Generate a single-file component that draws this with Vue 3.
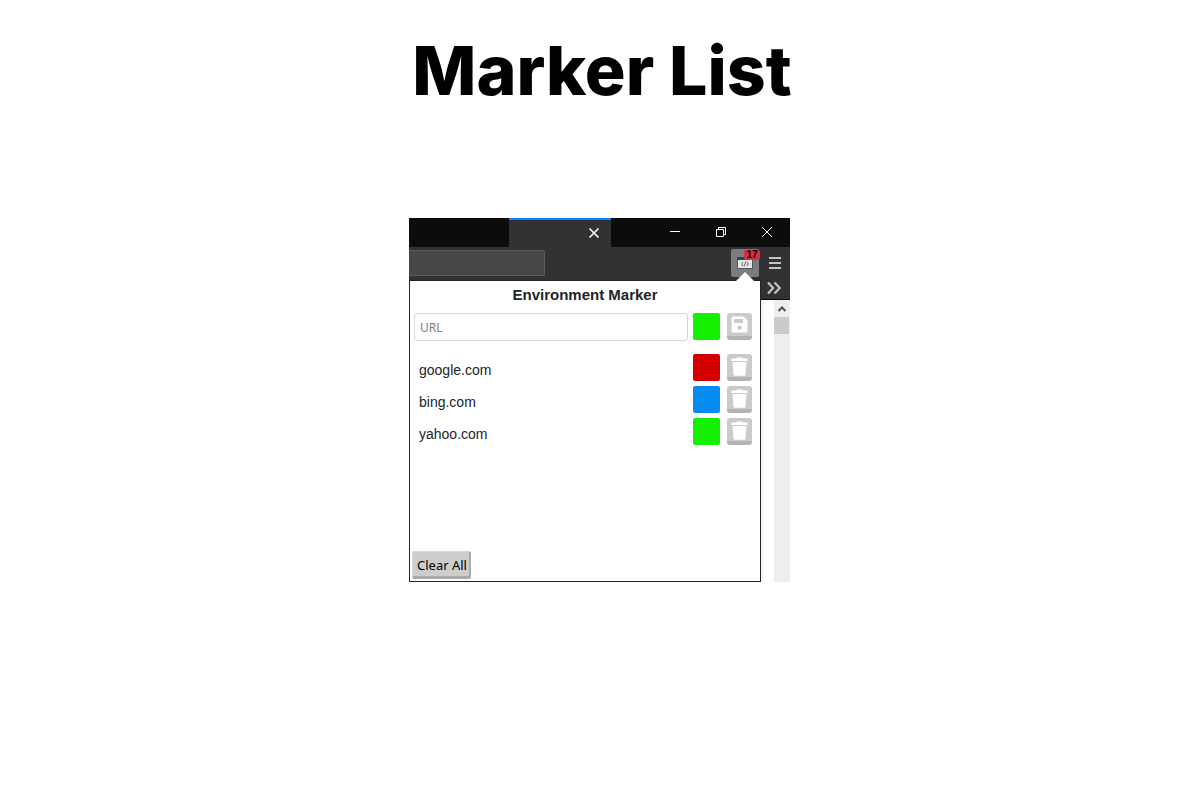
<script setup>
import { ref } from 'vue'

const url = ref('')
const markers = ref([
  { host: 'google.com', color: '#d40000' },
  { host: 'bing.com', color: '#058bf2' },
  { host: 'yahoo.com', color: '#14f000' },
])
function remove(i) {
  markers.value.splice(i, 1)
}
</script>

<template>
  <main class="page">
    <h1>Marker List</h1>
    <section class="window">
      <div class="titlebar">
        <div class="tab">
          <button class="bare" aria-label="Close tab">
            <svg width="12" height="12" viewBox="0 0 12 12"><path d="M1.5 1.5l9 9M10.500 1.500l-9 9" stroke="#f4f4f4" stroke-width="1.7" fill="none" /></svg>
          </button>
        </div>
        <div class="controls">
          <button class="bare" aria-label="Minimize">
            <svg width="12" height="12" viewBox="0 0 12 12"><path d="M1 5.500h10" stroke="#fff" fill="none" /></svg>
          </button>
          <button class="bare" aria-label="Restore">
            <svg width="12" height="12" viewBox="0 0 12 12"><path d="M1.500 3.500h7v7h-7zM3.500 3.500v-2h7v7h-2" stroke="#fff" fill="none" /></svg>
          </button>
          <button class="bare" aria-label="Close window">
            <svg width="12" height="12" viewBox="0 0 12 12"><path d="M1 1l10 10M11 1l-10 10" stroke="#fff" stroke-width="1" fill="none" /></svg>
          </button>
        </div>
      </div>
      <div class="toolbar">
        <div class="address"></div>
        <button class="extension" aria-label="Environment Marker">
          <svg width="16" height="13" viewBox="0 0 16 13">
            <path d="M0 1h16v11H0z" fill="#55565c" />
            <path d="M1 1h14v10H1z" fill="#e8e8ea" />
            <path d="M0 0h16v3H0z" fill="#17486f" />
            <path d="M6 5l-1.500 2L6 9M10 5l1.500 2L10 9M9 4.500l-2 5" stroke="#66666c" fill="none" />
          </svg>
          <span class="badge">17</span>
        </button>
        <button class="bare menu" aria-label="Menu">
          <svg width="12" height="12" viewBox="0 0 12 12"><path d="M0 1h12M0 6h12M0 11h12" stroke="#c4c4c6" stroke-width="2" fill="none" /></svg>
        </button>
      </div>
      <div class="bookmarks">
        <button class="bare" aria-label="More bookmarks">
          <svg width="14" height="12" viewBox="0 0 14 12"><path d="M1 0.500l5.200 5.500L1 11.500M7.500 0.500l5.200 5.500-5.200 5.500" stroke="#c4c4c6" stroke-width="2.200" fill="none" /></svg>
        </button>
      </div>
      <div class="content">
        <div class="scrollbar">
          <svg width="16" height="17" viewBox="0 0 16 17"><path d="M4.500 11L8 7.500l3.500 3.500" stroke="#505050" stroke-width="2" fill="none" /></svg>
          <div class="thumb"></div>
        </div>
      </div>

      <div class="popup">
        <h2>Environment Marker</h2>
        <form class="row entry" @submit.prevent>
          <input v-model="url" type="text" placeholder="URL" aria-label="URL" />
          <button type="button" class="swatch green" aria-label="Marker colour"></button>
          <button type="submit" class="tool" aria-label="Save">
            <svg width="17" height="17" viewBox="0 0 17 17">
              <path fill="#fff" fill-rule="evenodd" d="M2 0.500h10.500L16.500 4.500V15q0 1.500-1.500 1.500H2Q0.500 16.500 0.500 15V2Q0.500 0.500 2 0.500zM3 3v4h9V3zM8.500 9.500a2.200 2.200 0 1 0 0.010 0z" />
            </svg>
          </button>
        </form>
        <ul>
          <li v-for="(m, i) in markers" :key="m.host" class="row">
            <span class="host">{{ m.host }}</span>
            <button class="swatch" :style="{ background: m.color }" :aria-label="'Colour of ' + m.host"></button>
            <button class="tool" :aria-label="'Delete ' + m.host" @click="remove(i)">
              <svg width="17" height="19" viewBox="0 0 17 19">
                <path fill="#fff" d="M5.500 0.500h6v1H16q0.800 0 0.800 0.800V4H0.200V2.300q0-0.800 0.800-0.800h4.500zM1.500 5h14l-1 12.500q-0.100 1.200-1.300 1.200H3.800q-1.200 0-1.300-1.200z" />
              </svg>
            </button>
          </li>
        </ul>
        <button class="clear" @click="markers = []">Clear All</button>
      </div>
    </section>
  </main>
</template>

<style>
body {
  background: #fff;
}
</style>

<style scoped>
.page {
  display: flex;
  flex-direction: column;
  align-items: center;
  gap: 98px;
  padding-top: 20px;
  font-family: "Liberation Sans", Arial, sans-serif;
}
* {
  box-sizing: border-box;
}
h1 {
  margin: 0 0 0 4px;
  font: 800 68px/100px Inter, sans-serif;
  color: #000;
}
.window {
  position: relative;
  display: flex;
  flex-direction: column;
  width: 100%;
  max-width: 381px;
  min-height: 364px;
  margin-right: 1px;
  background: #fff;
}
button {
  padding: 0;
  border: 0;
  cursor: pointer;
}
svg {
  display: block;
}
.bare {
  background: none;
}
.titlebar {
  display: flex;
  justify-content: flex-end;
  height: 29px;
  background: #0c0c0d;
}
.tab {
  display: flex;
  align-items: center;
  justify-content: flex-end;
  width: 102px;
  padding: 0 11px 2px 0;
  border-top: 2px solid #0a84ff;
  background: #323234;
}
.controls {
  display: flex;
  align-items: center;
  justify-content: flex-end;
  gap: 34px;
  width: 179px;
  padding: 0 17px 2px 0;
}
.toolbar {
  display: flex;
  align-items: center;
  height: 32px;
  background: #323234;
}
.address {
  width: 136px;
  height: 26px;
  margin-right: auto;
  border: 1px solid #5a5a5c;
  border-left: 0;
  border-radius: 0 2px 2px 0;
  background: #474749;
}
.extension {
  position: relative;
  display: flex;
  align-items: center;
  justify-content: center;
  width: 28px;
  height: 28px;
  border-radius: 2px;
  background: #7c7c7e;
}
.badge {
  position: absolute;
  top: 1px;
  right: -1px;
  width: 16px;
  border-radius: 2px;
  background: #d92e40;
  color: #000;
  font: bold 10px/10px "Liberation Sans", Arial, sans-serif;
  font-kerning: none;
}
.menu {
  margin: 0 9px 0 10px;
}
.bookmarks {
  display: flex;
  align-items: center;
  justify-content: flex-end;
  height: 21px;
  padding: 0 9px 2px 0;
  border-bottom: 1px solid #0c0c0d;
  background: #323234;
}
.content {
  display: flex;
  flex: 1;
  justify-content: flex-end;
}
.scrollbar {
  width: 16px;
  background: #eee;
}
.thumb {
  height: 17px;
  margin-right: 1px;
  background: #cbcbcb;
}
.popup {
  position: absolute;
  inset: 62px 29px 0 0;
  display: flex;
  flex-direction: column;
  border: 1px solid #22242b;
  background: #fff;
  box-shadow: 2px 0 3px #0000000d;
  color: #212529;
}
.popup::before {
  content: "";
  position: absolute;
  top: -9px;
  right: 6px;
  border: 9px solid transparent;
  border-top: 0;
  border-bottom-color: #fff;
}
h2 {
  margin: 4px 0 8px;
  font-size: 15px;
  line-height: 20px;
  text-align: center;
}
.row {
  display: flex;
  align-items: center;
  height: 27px;
  padding-right: 8px;
}
.entry {
  padding-left: 4px;
}
input {
  flex: 1;
  min-width: 0;
  height: 28px;
  margin-right: 5px;
  padding: 1px 5px 0;
  border: 1px solid #d6d8dc;
  border-radius: 3px;
  background: #fff;
  font: 12px "Noto Sans", sans-serif;
}
input::placeholder {
  color: #7d7d82;
}
.swatch {
  width: 27px;
  height: 27px;
  margin-right: 7px;
  border-radius: 2px;
}
.green {
  background: #14f000;
}
.tool {
  display: flex;
  justify-content: center;
  width: 25px;
  height: 27px;
  padding-top: 3px;
  border-bottom: 4px solid #b3b3b3;
  border-radius: 3px;
  background: #cbcbcb;
}
ul {
  display: flex;
  flex-direction: column;
  gap: 5px;
  margin: 14px 0 0;
  padding: 0;
  list-style: none;
}
.host {
  flex: 1;
  padding: 4px 0 0 9px;
  font-size: 14px;
  line-height: 20px;
}
.clear {
  align-self: flex-start;
  height: 28px;
  margin: auto 0 2px 2px;
  padding: 2px 2px 0 4px;
  border: 1px solid #d8d8d8;
  border-width: 1px 2px 3px 1px;
  border-color: #d8d8d8 #aaa #aaa #d8d8d8;
  border-radius: 2px;
  background: #cdcdcd;
  color: #000;
  font: 13px "Noto Sans", sans-serif;
}
</style>
